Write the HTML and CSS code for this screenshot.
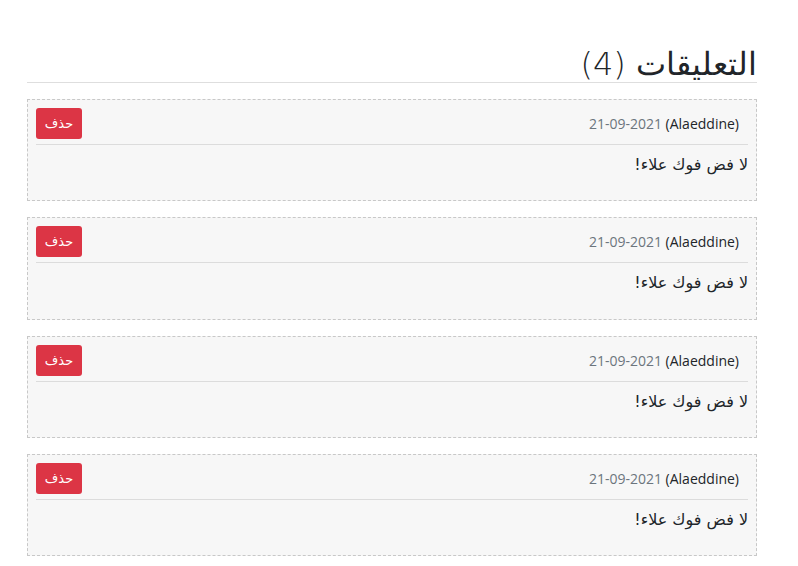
FILE: index.html
```html
<!DOCTYPE html>
<html lang="ar" dir="rtl">
<head>
<meta charset="utf-8">
<link rel="stylesheet" href="styles.css">
</head>
<body>
<div class="page">
  <h2 class="title">التعليقات (4)</h2>
  <div class="list">
    <div class="card">
      <div class="head">
        <span class="meta"><span class="date">21-09-2021</span> <span class="name">(Alaeddine)</span></span>
        <button class="del">حذف</button>
      </div>
      <div class="body">لا فض فوك علاء!</div>
    </div>
    <div class="card">
      <div class="head">
        <span class="meta"><span class="date">21-09-2021</span> <span class="name">(Alaeddine)</span></span>
        <button class="del">حذف</button>
      </div>
      <div class="body">لا فض فوك علاء!</div>
    </div>
    <div class="card">
      <div class="head">
        <span class="meta"><span class="date">21-09-2021</span> <span class="name">(Alaeddine)</span></span>
        <button class="del">حذف</button>
      </div>
      <div class="body">لا فض فوك علاء!</div>
    </div>
    <div class="card">
      <div class="head">
        <span class="meta"><span class="date">21-09-2021</span> <span class="name">(Alaeddine)</span></span>
        <button class="del">حذف</button>
      </div>
      <div class="body">لا فض فوك علاء!</div>
    </div>
  </div>
</div>
</body>
</html>
```
FILE: styles.css
```css
* { box-sizing: border-box; }
body {
  margin: 0;
  background: #fff;
  color: #212529;
  font-family: "Open Sans", "DejaVu Sans", sans-serif;
}
.page {
  width: 730px;
  margin: 0 41px 0 27px;
  padding-top: 47px;
}
.title {
  margin: 0;
  font-weight: 200;
  font-size: 32px;
  line-height: 35px;
  padding-bottom: 0;
  border-bottom: 1px solid #dedede;
  font-family: "DejaVu Sans", sans-serif;
}
.list {
  display: flex;
  flex-direction: column;
  gap: 16px;
  margin-top: 16px;
}
.card {
  background: #f7f7f7;
  border: 1px dashed #c8c8c8;
  padding: 8px 8px 0 8px;
  height: 102.3px;
}
.head {
  display: flex;
  align-items: center;
  justify-content: space-between;
  padding-right: 9px;
  border-bottom: 1px solid #dcdcdc;
  padding-bottom: 5px;
}
.meta { font-size: 14px; direction: ltr; }
.name { color: #212529; }
.date { color: #6c757d; }
.del {
  font-family: "DejaVu Sans", sans-serif;
  background: #dc3545;
  color: #fff;
  border: 0;
  border-radius: 3px;
  width: 46px;
  height: 31px;
  font-size: 13px;
  padding: 0;
}
.body {
  font-family: "DejaVu Sans", sans-serif;
  font-size: 16px;
  padding-top: 10px;
}
```
